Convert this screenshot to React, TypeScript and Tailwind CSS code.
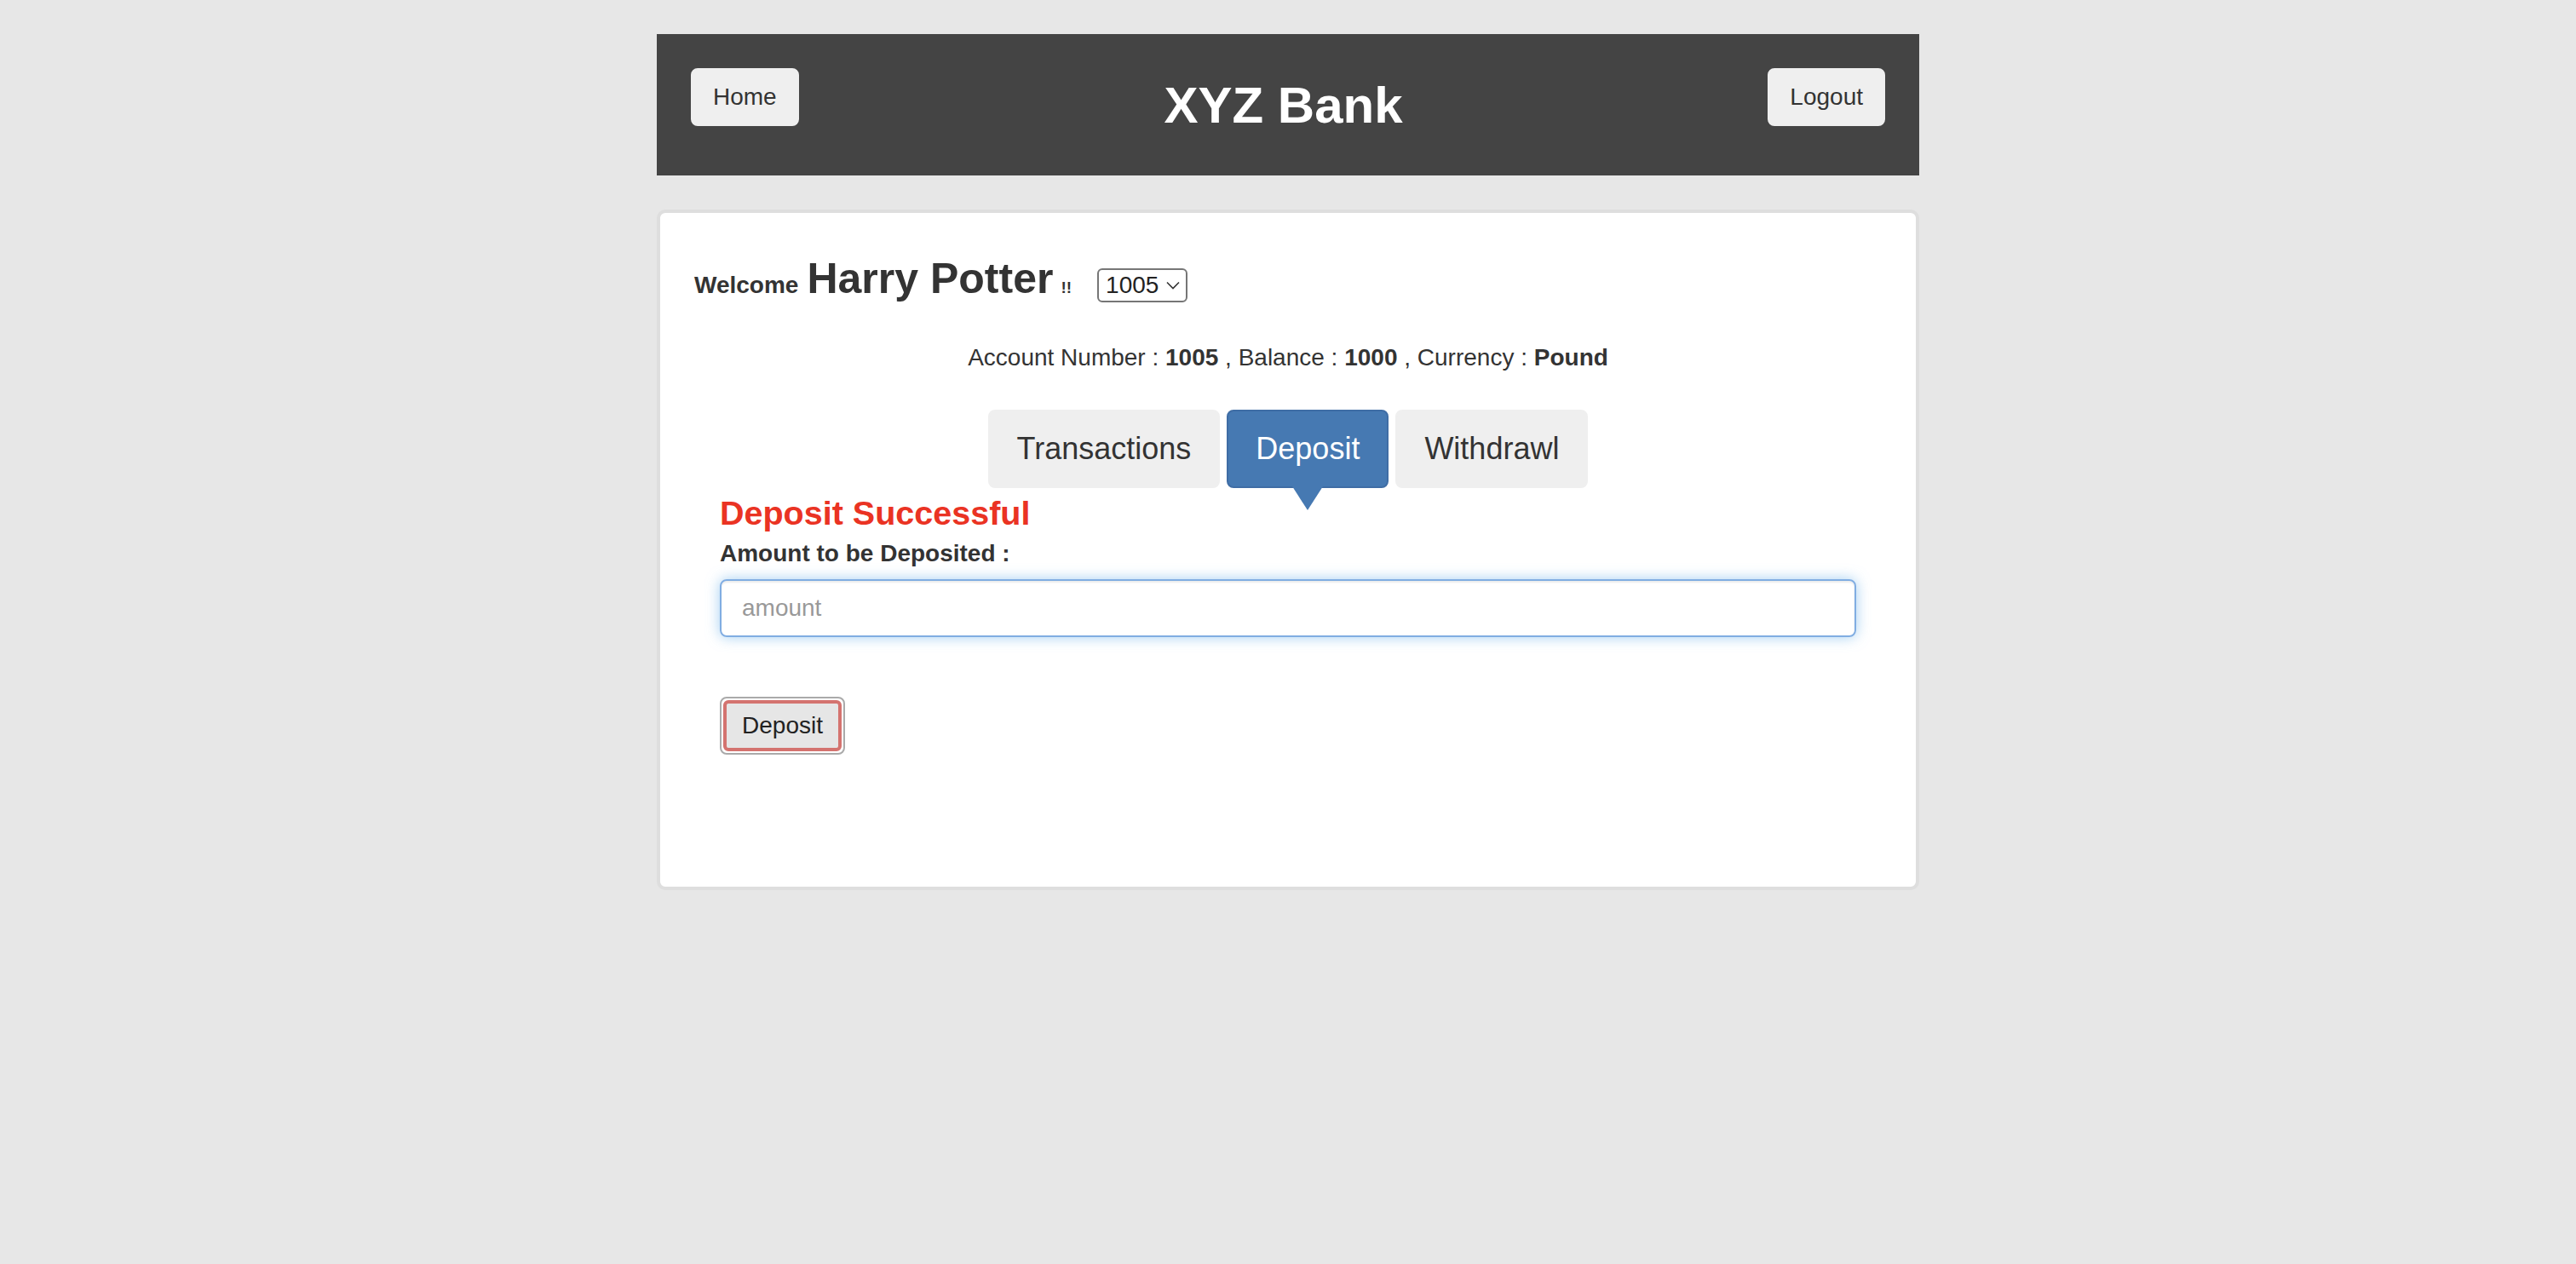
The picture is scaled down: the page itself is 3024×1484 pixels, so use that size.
import { useState } from 'react'

const font = "font-['Liberation_Sans',Arial,Helvetica,sans-serif]"

const tabs = ['Transactions', 'Deposit', 'Withdrawl']

function HeaderButton({ label }: { label: string }) {
  return (
    <button className="h-[68px] rounded-[8px] border-2 border-[#efefef] bg-[#efefef] px-[24px] text-[28px] leading-[40px] text-[#333]">
      {label}
    </button>
  )
}

export default function App() {
  const [active, setActive] = useState('Deposit')
  const [amount, setAmount] = useState('')

  return (
    <div className={`${font} min-h-screen bg-[#e7e7e7] pt-[40px] text-[#333]`}>
      <div className="mx-auto w-[1482px]">
        <header className="flex h-[166px] items-start justify-between bg-[#444] px-[40px] pt-[40px]">
          <HeaderButton label="Home" />
          <h1 className="mt-[11px] text-[60px] font-bold leading-[66px] text-white">XYZ Bank</h1>
          <HeaderButton label="Logout" />
        </header>

        <section className="mt-[40px] rounded-[10px] border-4 border-[#dedede] bg-white px-[40px] pb-[155px] pt-[48px]">
          <div className="flex items-baseline">
            <span className="text-[28px] font-bold">Welcome</span>
            <span className="ml-[10px] text-[50px] font-bold leading-[58px]">Harry Potter</span>
            <span className="ml-[9px] text-[19px] font-bold">!!</span>
            <div className="relative ml-[30px] inline-flex">
              <select
                className="h-[40px] w-[106px] appearance-none rounded-[6px] border-2 border-[#767676] bg-white pl-[8px] text-[28px] leading-[36px] text-[#222] outline-none"
                defaultValue="1005"
              >
                <option value="1005">1005</option>
              </select>
              <svg
                className="pointer-events-none absolute right-[9px] top-[15px]"
                width="16"
                height="10"
                viewBox="0 0 16 10"
                fill="none"
                stroke="#333"
                strokeWidth="1.6"
              >
                <path d="M1 1.5 L8 8.5 L15 1.5" />
              </svg>
            </div>
          </div>

          <p className="mt-[44px] text-center text-[28px] leading-[40px]">
            Account Number : <strong>1005</strong> , Balance : <strong>1000</strong> , Currency : <strong>Pound</strong>
          </p>

          <nav className="mt-[41px] flex justify-center gap-[8px]">
            {tabs.map((tab) => {
              const isActive = tab === active
              return (
                <button
                  key={tab}
                  onClick={() => setActive(tab)}
                  className={`relative flex h-[92px] items-center rounded-[8px] border-2 px-[32px] text-[36px] ${
                    isActive ? 'border-[#3f6da5] bg-[#4679b2] text-white' : 'border-[#efefef] bg-[#efefef] text-[#333]'
                  }`}
                >
                  {tab}
                  {isActive && (
                    <span className="absolute left-1/2 top-full -translate-x-1/2 border-x-[18px] border-t-[28px] border-x-transparent border-t-[#4679b2]" />
                  )}
                </button>
              )
            })}
          </nav>

          <div className="px-[30px]">
            <h4 className="mt-[8px] text-[39.5px] font-bold leading-[42px] text-[#ea3323]">Deposit Successful</h4>
            <label className="mt-[7px] block text-[28px] font-bold leading-[40px]">Amount to be Deposited :</label>
            <input
              type="number"
              placeholder="amount"
              value={amount}
              onChange={(event) => setAmount(event.target.value)}
              className="mt-[10px] block h-[68px] w-full rounded-[8px] border-2 border-[#80ade2] px-[24px] text-[28px] text-[#555] shadow-[inset_0_2px_2px_rgba(0,0,0,0.075),0_0_16px_rgba(102,175,233,0.6)] outline-none placeholder:text-[#999]"
            />
            <button className="mt-[70px] block h-[68px] w-[147px] rounded-[8px] border-2 border-[#aaa] bg-white p-[2px]">
              <span className="flex h-full w-full items-center justify-center rounded-[6px] border-4 border-[#d4736f] bg-[#e6e6e6] text-[28px] leading-[40px] text-[#222]">
                Deposit
              </span>
            </button>
          </div>
        </section>
      </div>
    </div>
  )
}
